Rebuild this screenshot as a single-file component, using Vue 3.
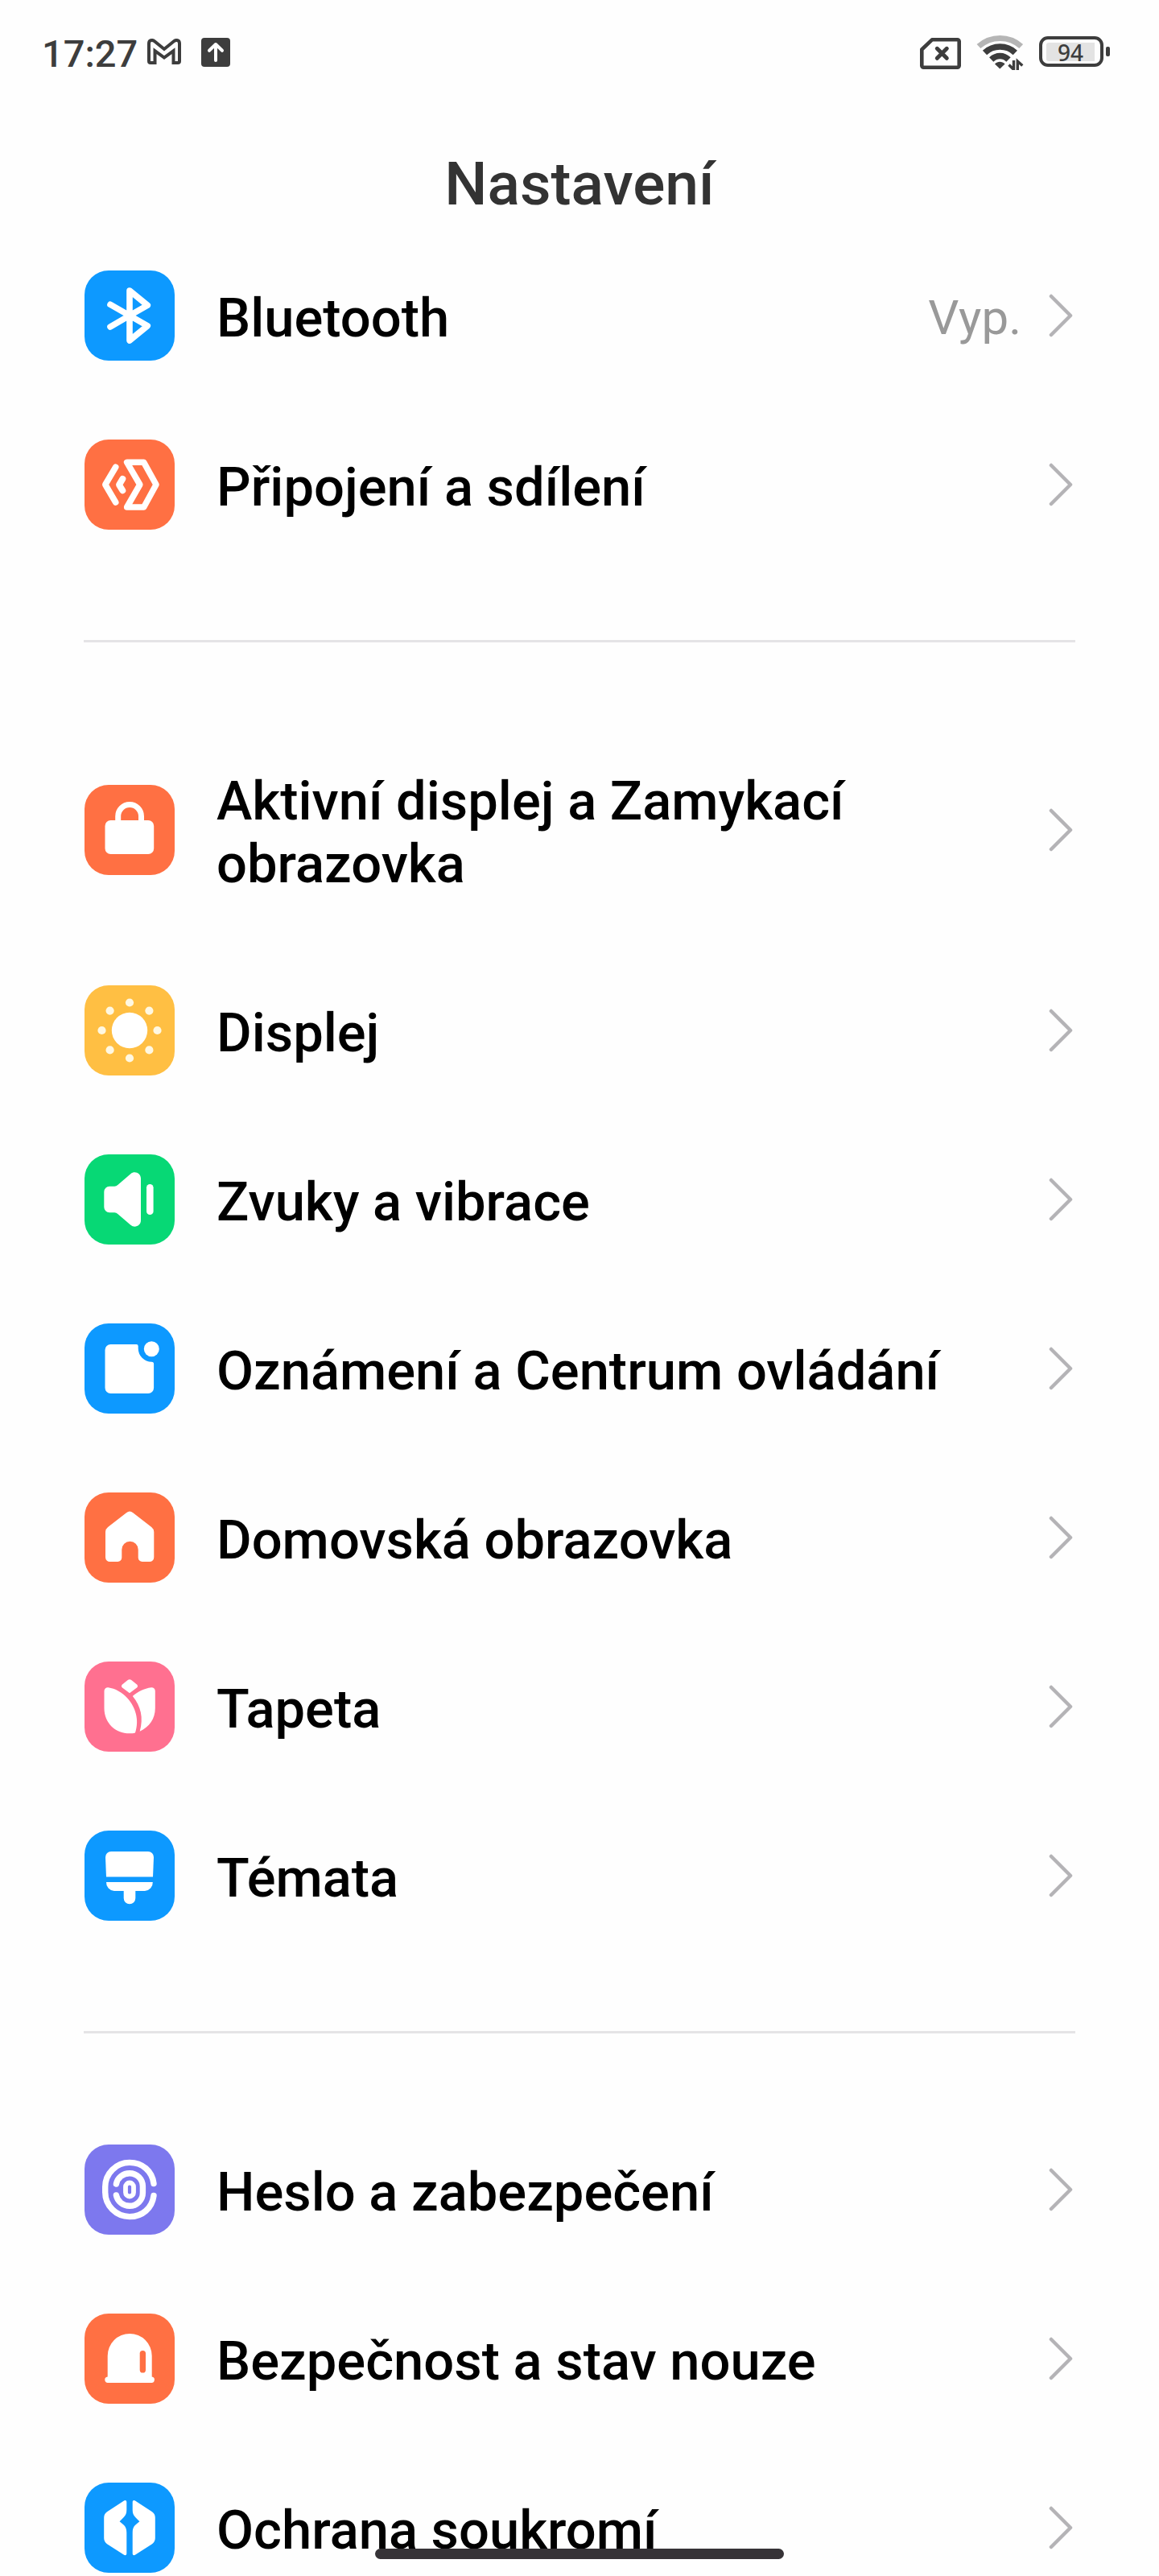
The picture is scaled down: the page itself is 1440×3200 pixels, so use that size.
<template>
  <div class="settings-page">
    <div class="status-bar">
      <div class="status-left">
        <span class="clock">17:27</span>
        <svg class="gmail-icon" width="42" height="32" viewBox="0 0 42 32" fill="none" stroke="#3d3d3d" stroke-width="4">
          <path d="M2 6C2 2 6 .8 9 3.3L21 13L33 3.3C36 .8 40 2 40 6V28a2 2 0 0 1-2 2H32.5V15.2L21 23.6L9.5 15.2V30H4a2 2 0 0 1-2-2z" />
        </svg>
        <svg class="upload-icon" width="36" height="36" viewBox="0 0 36 36">
          <rect width="36" height="36" rx="4" fill="#3d3d3d" />
          <path d="M18 28V8M10 15.8L18 8L26 15.8" fill="none" stroke="#fff" stroke-width="4" stroke-linecap="round" stroke-linejoin="round" />
        </svg>
      </div>
      <div class="status-right">
        <svg class="sim-icon" width="51" height="39" viewBox="0 0 51 39" fill="none" stroke="#3d3d3d" stroke-linejoin="round" stroke-linecap="round">
          <path d="M15 2.3H46.5a2.2 2.2 0 0 1 2.2 2.2V34.5a2.2 2.2 0 0 1-2.2 2.2H4.5a2.2 2.2 0 0 1-2.2-2.2V14.5z" stroke-width="4.6" />
          <path d="M21.3 13.3L33.3 25.3M33.3 13.3L21.3 25.3" stroke-width="5" />
        </svg>
        <svg width="59" height="44" viewBox="0 0 59 44" fill="none" stroke="#3d3d3d">
          <path d="M3 14.5C18 1 41 1 55.7 14.5" stroke="#b5b5b5" stroke-width="7" />
          <path d="M10.5 22.5C21 12.5 38 12.5 48.3 22.5" stroke-width="7.6" />
          <path d="M18.7 31C25 25 34 25 40 31" stroke-width="7.6" />
          <path d="M23 36.5C26.500 32.8 32 32.8 35.6 36.5L29.3 42.5z" fill="#3d3d3d" stroke="none" />
          <path d="M46.5 32V43.5L40.5 37.5M51.3 44V33L57.3 38.5" stroke-width="3.4" />
        </svg>
        <div class="battery">
          <div class="battery-body">
            <div class="battery-level">94</div>
          </div>
          <div class="battery-tip"></div>
        </div>
      </div>
    </div>

    <h1 class="page-title">Nastavení</h1>

    <div class="settings-group" v-for="(group, index) in groups" :key="index">
      <div class="settings-item" v-for="item in group" :key="item.label">
        <!-- icons come from the static list below -->
        <svg class="item-icon" :class="item.color" viewBox="0 0 112 112" v-html="item.icon"></svg>
        <div class="item-label">{{ item.label }}</div>
        <div v-if="item.value" class="item-value">{{ item.value }}</div>
        <svg class="item-arrow" width="30" height="54" viewBox="0 0 30 54">
          <path d="M3 3L27 27L3 51" />
        </svg>
      </div>
    </div>

    <div class="home-indicator"></div>
  </div>
</template>

<script setup>
const line = 'fill="none" stroke="#fff" stroke-linecap="round" stroke-linejoin="round"'

const privacyHalf = 'M48.3 23C50.5 21.3 52.3 22 52.3 24.3V34C52.3 42 47.5 43.5 43.6 48.3C47.5 52 52.3 53.5 52.3 62V88C52.3 90.3 50.5 91 48.3 89.3L28 76.2A9 9 0 0 1 24.2 69V43.5A9 9 0 0 1 28 36.3z'

const groups = [
  [
    {
      label: 'Bluetooth',
      value: 'Vyp.',
      color: 'blue',
      icon: `<path ${line} stroke-width="7.6" d="M32 42.3L56 56L78.3 68.7L56 87V25L78.3 43.3L56 56L32 70" />`
    },
    {
      label: 'Připojení a sdílení',
      color: 'orange',
      icon: `<path ${line} stroke-width="7.6" d="M38.7 34.3L25.8 56L38.7 78M52.7 28.3H73.7L89 56L73.7 84H52.7L68.8 56z" />
        <path ${line} stroke-width="8" d="M47.3 49L43 56.2L47.3 63.3" />`
    }
  ],
  [
    {
      label: 'Aktivní displej a Zamykací obrazovka',
      color: 'orange',
      icon: `<rect x="25.5" y="44" width="60.7" height="42" rx="7" fill="#fff" />
        <path fill="none" stroke="#fff" stroke-width="7" d="M41.7 46V39a14.4 14.4 0 0 1 28.8 0V46" />`
    },
    {
      label: 'Displej',
      color: 'yellow',
      icon: `<circle cx="56" cy="56" r="22.2" fill="#fff" />
        <g fill="#fff8e2"><circle cx="56" cy="21.5" r="5.1" /><circle cx="56" cy="90.5" r="5.1" />
        <circle cx="21.5" cy="56" r="5.1" /><circle cx="90.5" cy="56" r="5.1" />
        <circle cx="31.6" cy="31.6" r="5.1" /><circle cx="80.4" cy="31.6" r="5.1" />
        <circle cx="31.6" cy="80.4" r="5.1" /><circle cx="80.4" cy="80.4" r="5.1" /></g>`
    },
    {
      label: 'Zvuky a vibrace',
      color: 'green',
      icon: `<path fill="#fff" d="M31 39.7h6.3a6 6 0 0 0 4-1.6L57.3 24.2C62.3 20 70 23.3 70 30V82c0 6.7-7.7 10-12.7 5.8L41.3 73.9a6 6 0 0 0-4-1.6H31a6.7 6.7 0 0 1-6.7-6.7V46.4a6.7 6.7 0 0 1 6.7-6.7z" />
        <rect x="77" y="37" width="8.6" height="38" rx="4.3" fill="#fff" />`
    },
    {
      label: 'Oznámení a Centrum ovládání',
      color: 'blue',
      icon: `<path fill="#fff" d="M32.5 26H64.5a2.2 2.2 0 0 1 2.2 2.2V31.1a16.6 16.6 0 0 0 16.6 16.6a2.7 2.7 0 0 1 2.8 2.7V80a7 7 0 0 1-7 7H32.5a7 7 0 0 1-7-7V33a7 7 0 0 1 7-7z" />
        <circle cx="83.3" cy="31.7" r="9.5" fill="#fff" />`
    },
    {
      label: 'Domovská obrazovka',
      color: 'orange',
      icon: `<path fill="#fff" d="M52 25.2a6.5 6.5 0 0 1 8.3 0L83.2 43a8 8 0 0 1 3.1 6V80.5a5.5 5.5 0 0 1-5.5 5.5H71.7a5 5 0 0 1-5-5V71a10.2 10.2 0 0 0-20.4 0V81a5 5 0 0 1-5 5H31.5a5.5 5.5 0 0 1-5.5-5.5V49a8 8 0 0 1 3.1-6z" />`
    },
    {
      label: 'Tapeta',
      color: 'pink',
      icon: `<path fill="#fff" d="M53.8 23a3.6 3.6 0 0 1 4.4 0L65 28.4a2.7 2.7 0 0 1 0 4.2L56 39.3L47 32.6a2.7 2.7 0 0 1 0-4.2z" />
        <path fill="#fff" d="M29.5 32.3C38 33.5 47 38.5 53 45.2C63 56 68.5 72 63 88.4C61 89.3 58 89.3 56 89.3C38 89.3 24.5 76 24.5 58V36.5a4.3 4.3 0 0 1 5-4.2z" />
        <path fill="#fff" d="M59.8 43C66 37.5 74 33.5 83 32.3a4.3 4.3 0 0 1 4.8 4.2V58C87.8 71 80.5 81.5 68.7 86.7C73.5 70 70 55.5 59.8 43z" />`
    },
    {
      label: 'Témata',
      color: 'blue',
      icon: `<path fill="#fff" d="M33 26H79a7 7 0 0 1 7 7L85 57.5H27L26 33a7 7 0 0 1 7-7z" />
        <path fill="#fff" d="M27 64H84.8A10.5 10.5 0 0 1 75 75H63.3V84a7.3 7.3 0 0 1-14.6 0V75H36.8A10.5 10.5 0 0 1 27 64z" />`
    }
  ],
  [
    {
      label: 'Heslo a zabezpečení',
      color: 'purple',
      icon: `<path ${line} stroke-width="7.4" d="M86 48.5C84 33 72 22.4 56 22.4A30.3 30.3 0 0 0 25.7 52.7V59.3A30.3 30.3 0 0 0 56 89.6C72 89.6 84 79 86 63.5" />
        <path ${line} stroke-width="7.4" d="M39.4 49C41 41 48 35.7 56 35.7A16.4 16.4 0 0 1 72.4 52V60A16.4 16.4 0 0 1 56 76.3C48 76.3 41 71 39.4 63" />
        <rect x="51" y="47.5" width="10" height="17" rx="5" fill="none" stroke="#fff" stroke-width="5.8" />`
    },
    {
      label: 'Bezpečnost a stav nouze',
      color: 'orange',
      icon: `<path fill="#fff" d="M28.7 52.5a27.5 27.5 0 0 1 55 0V78.4a3.8 3.8 0 0 1-1.3 7.6H29.5a3.8 3.8 0 0 1-.8-7.6z" />
        <rect x="68.7" y="46" width="7.3" height="27.5" rx="3.6" fill="#ff7043" />`
    },
    {
      label: 'Ochrana soukromí',
      color: 'blue',
      icon: `<path fill="#fff" d="${privacyHalf}" />
        <path fill="#fff" transform="translate(112 0) scale(-1 1)" d="${privacyHalf}" />`
    }
  ]
]
</script>

<style>
body {
  margin: 0;
  background: #fefefe;
}
</style>

<style scoped>
.settings-page {
  position: relative;
  width: 1440px;
  height: 3200px;
  overflow: hidden;
  background: #fefefe;
  font-family: Roboto, 'Noto Sans', sans-serif;
  color: #000;
}
.status-bar {
  height: 130px;
  box-sizing: border-box;
  padding: 0 61px 0 52px;
  display: flex;
  align-items: center;
  justify-content: space-between;
  color: #3d3d3d;
}
.status-left,
.status-right {
  display: flex;
  align-items: center;
}
.status-right {
  gap: 19px;
}
.clock {
  width: 131px;
  padding-top: 4px;
  font-size: 47px;
  font-weight: 500;
  line-height: 54px;
}
.gmail-icon {
  margin-bottom: 2px;
}
.upload-icon {
  margin-left: 25px;
}
.sim-icon {
  margin-top: 3px;
}
.battery {
  display: flex;
  align-items: center;
  gap: 3px;
  margin-bottom: 2px;
}
.battery-body {
  width: 80px;
  height: 38px;
  box-sizing: border-box;
  border: 4px solid #3d3d3d;
  border-radius: 11px;
  padding: 4px 7px 3px 5px;
}
.battery-level {
  height: 23px;
  background: #e3e3e3;
  border-radius: 3px 0 0 3px;
  font-family: 'Noto Sans', sans-serif;
  font-size: 28px;
  font-weight: 500;
  line-height: 25px;
  text-align: center;
}
.battery-tip {
  width: 5px;
  height: 12px;
  border-radius: 2px;
  background: #3d3d3d;
}
.page-title {
  margin: 54px 0 15px;
  font-size: 75px;
  font-weight: 500;
  line-height: 88px;
  text-align: center;
  color: #333;
}
.settings-group {
  margin: 0 104px;
}
.settings-group + .settings-group {
  margin-top: 88px;
  padding-top: 89px;
  border-top: 3px solid #e5e4e6;
}
.settings-item {
  display: flex;
  align-items: center;
  padding: 63px 3px 63px 1px;
}
.item-icon {
  flex: none;
  width: 112px;
  height: 112px;
  margin: -20px 52px -20px 0;
  border-radius: 30px;
}
.blue {
  background: #0d99ff;
}
.orange {
  background: #ff7043;
}
.yellow {
  background: #ffbf43;
}
.green {
  background: #07d875;
}
.pink {
  background: #ff7090;
}
.purple {
  background: #7d78ee;
}
.item-label {
  flex: 1;
  padding: 6px 60px 0 0;
  font-size: 66.9px;
  font-weight: 500;
  line-height: 78px;
}
.item-value {
  margin-right: 34px;
  padding-top: 5px;
  font-size: 60px;
  line-height: 70px;
  color: #999;
}
.item-arrow {
  flex: none;
}
.item-arrow path {
  fill: none;
  stroke: #b4b3b6;
  stroke-width: 4.5;
  stroke-linecap: round;
  stroke-linejoin: round;
}
.home-indicator {
  position: absolute;
  left: 466px;
  bottom: 21px;
  width: 508px;
  height: 13px;
  border-radius: 7px;
  background: #363337;
}
</style>
